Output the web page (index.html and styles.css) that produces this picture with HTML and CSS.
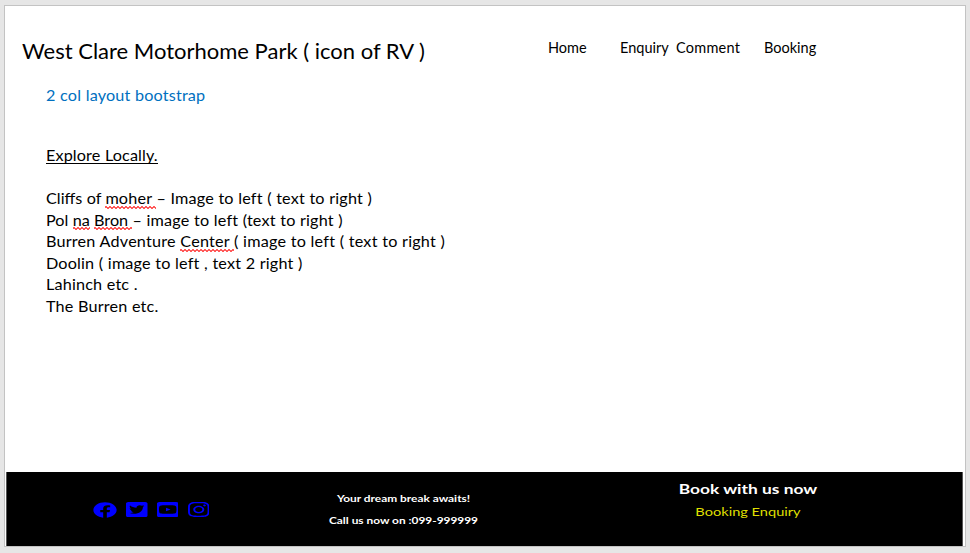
FILE: index.html
```html
<!DOCTYPE html>
<html lang="en">
<head>
<meta charset="utf-8">
<title>West Clare Motorhome Park</title>
<link rel="stylesheet" href="styles.css">
</head>
<body>
<div class="slide">
  <header class="header">
    <h1 class="title">West Clare Motorhome Park ( icon of RV )</h1>
    <nav class="nav">
      <span class="nav-home">Home</span>
      <span class="nav-enquiry">Enquiry</span>
      <span class="nav-comment">Comment</span>
      <span class="nav-booking">Booking</span>
    </nav>
  </header>
  <main class="main">
    <p class="note">2 col layout bootstrap</p>
    <h2 class="subtitle"><span>Explore Locally.</span></h2>
    <ul class="places">
      <li><span class="tight">Cliffs of </span><span class="typo">moher </span>– Image to left ( text to right )</li>
      <li><span class="tight">Pol <span class="typo">na</span> <span class="typo">Bron </span></span>– image to left (text to right )</li>
      <li class="burren">Burren Adventure <span class="typo">Center </span>( image to left ( text to right )</li>
      <li>Doolin ( image to left , text 2 right )</li>
      <li>Lahinch etc .</li>
      <li>The Burren etc.</li>
    </ul>
  </main>
  <footer class="footer">
    <div class="social">
      <svg viewBox="0 0 512 512" preserveAspectRatio="none" class="icon round"><path d="M504 256C504 119 393 8 256 8S8 119 8 256c0 123.780 90.690 226.380 209.250 245V327.690h-63V256h63v-54.640c0-62.150 37-96.480 93.670-96.480 27.140 0 55.520 4.840 55.520 4.840v61h-31.280c-30.800 0-40.410 19.120-40.410 38.730V256h68.780l-11 71.690h-57.780V501C413.310 482.380 504 379.780 504 256z"/></svg>
      <svg viewBox="0 32 448 448" preserveAspectRatio="none" class="icon"><path d="M400 32H48C21.500 32 0 53.500 0 80v352c0 26.500 21.500 48 48 48h352c26.500 0 48-21.500 48-48V80c0-26.500-21.500-48-48-48zm-48.900 158.800c.2 2.800.2 5.700.2 8.500 0 86.700-66 186.600-186.600 186.600-37.200 0-71.700-10.800-100.700-29.400 5.300.6 10.400.8 15.800.8 30.700 0 58.900-10.400 81.400-28-28.800-.6-53-19.500-61.300-45.500 10.100 1.500 19.200 1.500 29.600-1.200-30-6.100-52.500-32.500-52.500-64.400v-.8c8.700 4.900 18.900 7.900 29.600 8.300a65.447 65.447 0 0 1-29.200-54.600c0-12.200 3.200-23.400 8.900-33.100 32.300 39.800 80.800 65.800 135.200 68.600-9.300-44.500 24-80.600 64-80.600 18.900 0 35.900 7.900 47.900 20.700 14.800-2.800 29-8.300 41.600-15.800-4.900 15.200-15.200 28-28.800 36.100 13.200-1.400 26-5.100 37.800-10.200-8.900 13.100-20.100 24.700-32.900 34z"/></svg>
      <svg viewBox="0 32 448 448" preserveAspectRatio="none" class="icon"><path d="M186.800 202.100l95.200 54.100-95.200 54.100V202.100zM448 80v352c0 26.500-21.500 48-48 48H48c-26.500 0-48-21.500-48-48V80c0-26.500 21.500-48 48-48h352c26.500 0 48 21.500 48 48zm-42 176.300s0-59.600-7.600-88.200c-4.200-15.800-16.500-28.200-32.200-32.400C337.900 128 224 128 224 128s-113.900 0-142.200 7.700c-15.700 4.200-28 16.600-32.200 32.400-7.600 28.500-7.600 88.200-7.600 88.200s0 59.600 7.600 88.200c4.200 15.800 16.500 27.700 32.200 31.900C110.100 384 224 384 224 384s113.900 0 142.200-7.700c15.700-4.200 28-16.100 32.200-31.900 7.600-28.500 7.600-88.100 7.600-88.100z"/></svg>
      <svg viewBox="0 32 448 448" preserveAspectRatio="none" class="icon"><path d="M224.100 141c-63.600 0-114.900 51.300-114.900 114.900s51.300 114.900 114.900 114.900S339 319.500 339 255.900 287.700 141 224.100 141zm0 189.600c-41.100 0-74.700-33.500-74.700-74.700s33.500-74.700 74.700-74.700 74.700 33.500 74.700 74.700-33.600 74.700-74.700 74.700zm146.400-194.300c0 14.900-12 26.800-26.800 26.800-14.900 0-26.800-12-26.800-26.800s12-26.800 26.800-26.800 26.800 12 26.800 26.800zm76.100 27.200c-1.700-35.900-9.900-67.700-36.200-93.900-26.200-26.200-58-34.400-93.900-36.200-37-2.100-147.900-2.100-184.900 0-35.800 1.700-67.600 9.900-93.900 36.100s-34.400 58-36.200 93.900c-2.100 37-2.100 147.900 0 184.900 1.700 35.900 9.900 67.700 36.200 93.900s58 34.400 93.900 36.200c37 2.100 147.900 2.100 184.900 0 35.900-1.700 67.700-9.900 93.900-36.200 26.200-26.200 34.400-58 36.200-93.900 2.100-37 2.100-147.800 0-184.800zM398.800 388c-7.800 19.600-22.900 34.700-42.600 42.600-29.500 11.700-99.500 9-132.100 9s-102.700 2.600-132.100-9c-19.600-7.800-34.700-22.900-42.600-42.600-11.700-29.500-9-99.500-9-132.100s-2.600-102.700 9-132.100c7.800-19.600 22.900-34.700 42.600-42.600 29.500-11.700 99.500-9 132.100-9s102.700-2.600 132.100 9c19.600 7.800 34.700 22.900 42.600 42.600 11.700 29.500 9 99.500 9 132.100s2.700 102.700-9 132.100z"/></svg>
    </div>
    <div class="contact">
      <p>Your dream break awaits!</p>
      <p>Call us now on :099-999999</p>
    </div>
    <div class="book">
      <h3>Book with us now</h3>
      <p>Booking Enquiry</p>
    </div>
  </footer>
</div>
</body>
</html>
```
FILE: styles.css
```css
* { box-sizing: border-box; margin: 0; padding: 0; }
body { width: 970px; height: 553px; padding: 5px 4px 6px; background: #e6e6e6; overflow: hidden; font-family: Lato, sans-serif; color: #000; }
.slide { display: flex; flex-direction: column; width: 962px; height: 542px; background: #fff; border: 1px solid #c3c3c3; }
.header { display: flex; height: 78px; padding: 31px 0 0 17px; white-space: nowrap; }
.title { width: 526px; font-size: 22px; line-height: 28px; font-weight: 400; }
.nav { display: flex; font-size: 14.500px; line-height: 22px; }
.nav-home { width: 72px; }
.nav-enquiry { width: 56px; }
.nav-comment { width: 88px; letter-spacing: 0.250px; }
.main { flex: 1; padding-left: 41px; font-size: 16.200px; line-height: 21.550px; letter-spacing: 0.170px; word-spacing: 0.200px; white-space: nowrap; }
.note { color: #0070c0; margin-bottom: 38px; }
.subtitle { font-size: inherit; font-weight: 400; margin-bottom: 22px; letter-spacing: 0.120px; }
.subtitle span { border-bottom: 1px solid #000; display: inline-block; line-height: 17px; }
.places { list-style: none; }
.burren { letter-spacing: 0.200px; }
.tight { letter-spacing: 0; }
.typo { position: relative; display: inline-block; white-space: pre; }
.typo::after { content: ""; position: absolute; left: 0; right: 0; bottom: 0; height: 3px; background: linear-gradient(45deg, transparent 38%, #ff5a5a 40%, #ff5a5a 58%, transparent 60%) 0 0 / 4px 3px, linear-gradient(-45deg, transparent 38%, #ff5a5a 40%, #ff5a5a 58%, transparent 60%) 2px 0 / 4px 3px; }
.footer { display: flex; width: 957px; height: 74px; margin-left: 1px; background: #000; border: solid #555; border-width: 0 1px; color: #fff; text-align: center; white-space: nowrap; overflow: hidden; }
.social { display: flex; width: 238px; padding: 30px 0 0 86px; gap: 9.200px; }
.icon { width: 21.500px; height: 15px; fill: #00f; }
.icon.round { width: 24px; height: 16px; }
.contact { width: 317px; padding-top: 16px; font-size: 9px; line-height: 22px; font-weight: 700; }
.contact p { transform: scaleX(1.320); }
.book { width: 372px; padding-top: 7px; }
.book h3, .book p { transform: scaleX(1.390); }
.book h3 { font-size: 12.500px; line-height: 22px; font-weight: 700; }
.book p { font-size: 10.500px; line-height: 22px; color: #dfdf00; }
```
